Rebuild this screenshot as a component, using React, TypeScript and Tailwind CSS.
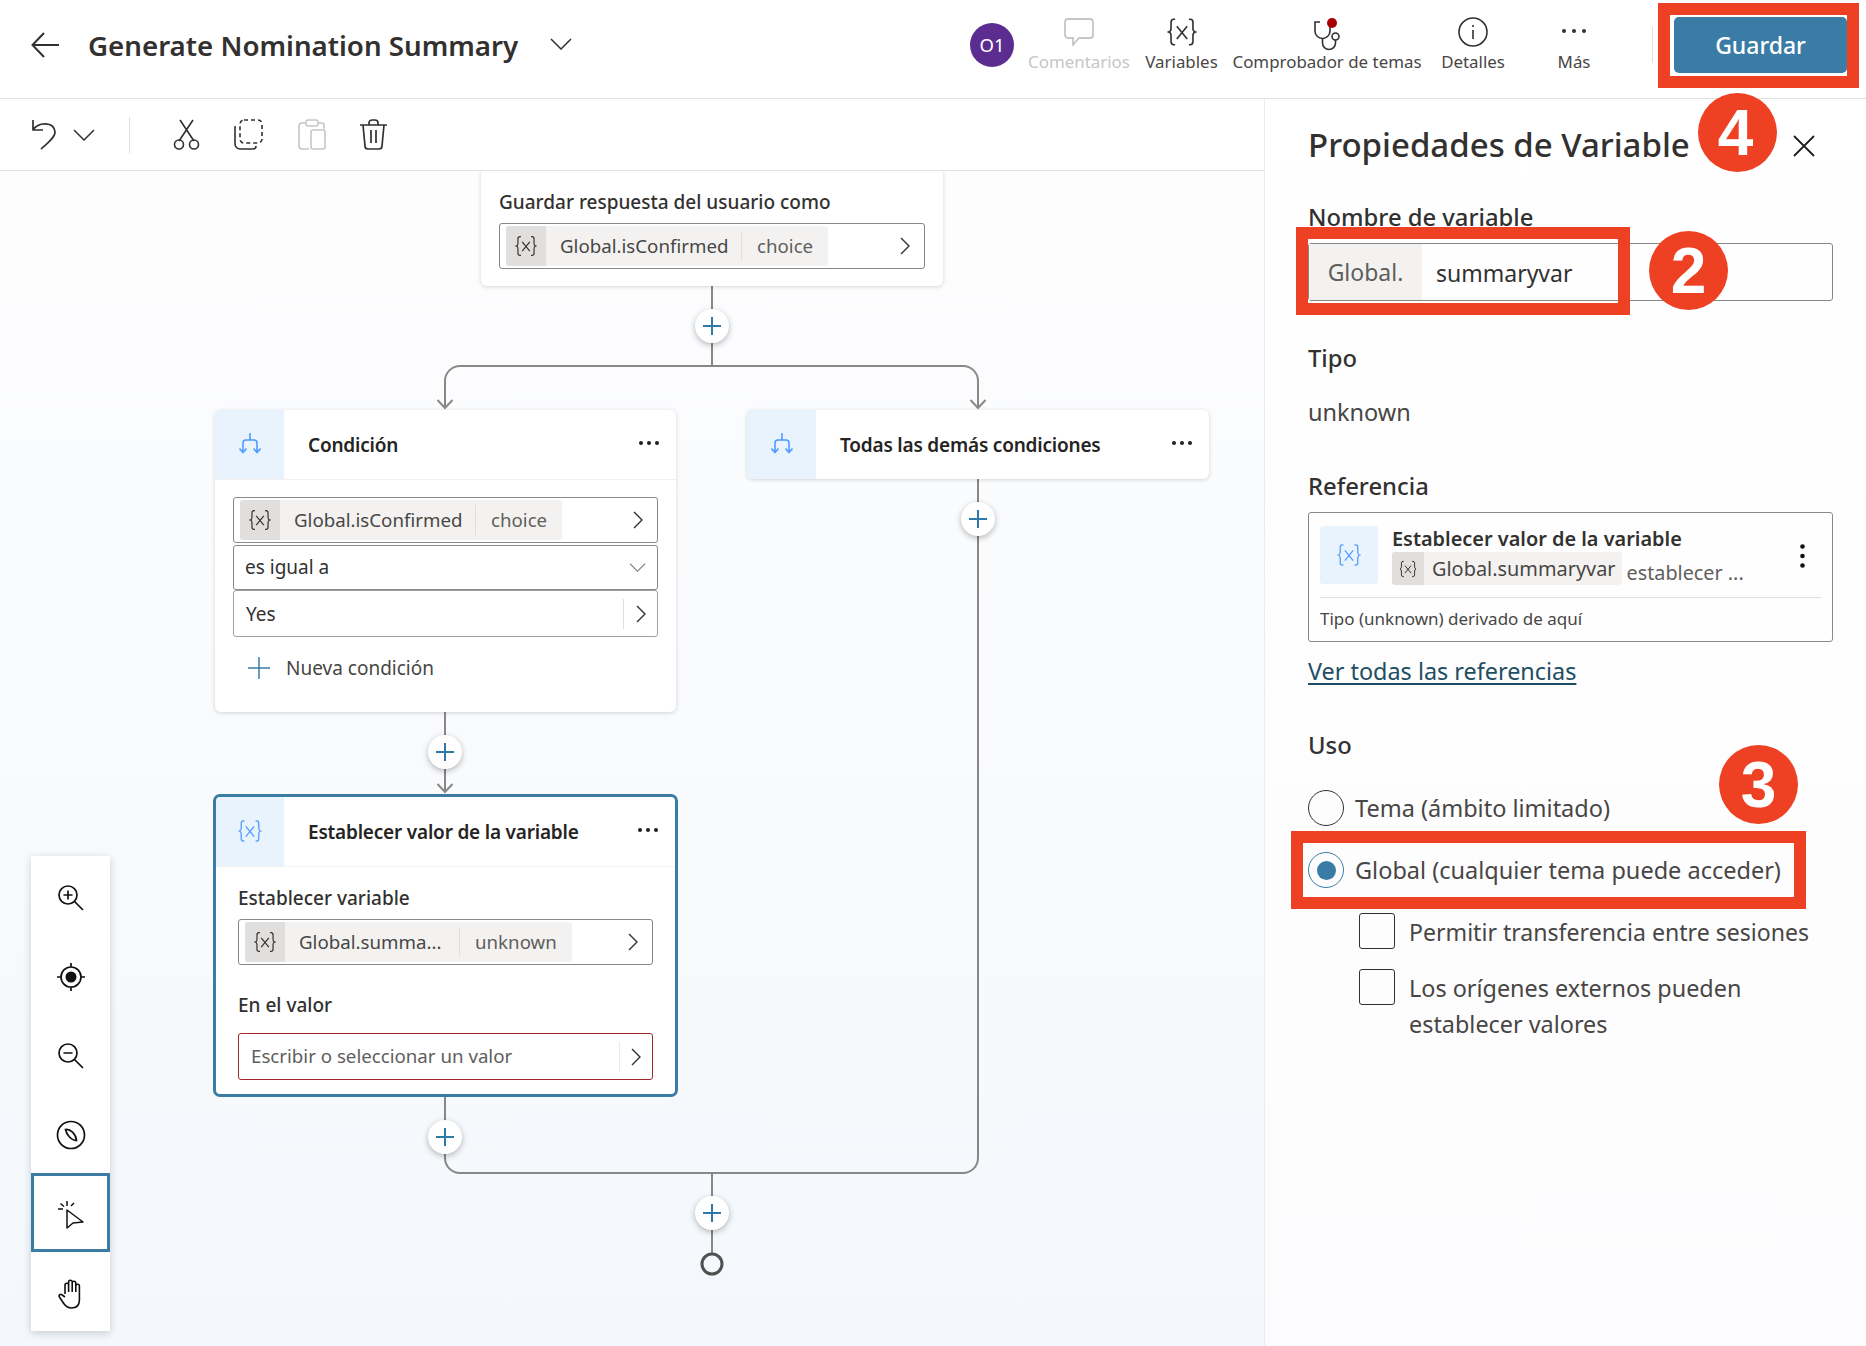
import React from "react";

const VarIcon = ({ className = "" }: { className?: string }) => (
  <svg viewBox="0 0 26 26" fill="none" stroke="currentColor" strokeWidth="1.4" className={className}>
    <path d="M7 2H6a2.5 2.5 0 0 0-2.5 2.5V10c0 1.6-.8 2.6-2 3 1.2.4 2 1.4 2 3v5.500A2.500 2.500 0 0 0 6 24h1" />
    <path d="M19 2h1a2.500 2.500 0 0 1 2.500 2.500V10c0 1.600.8 2.600 2 3-1.200.4-2 1.400-2 3v5.500A2.500 2.500 0 0 1 20 24h-1" />
    <path d="M8.500 8l9 11M17.500 8l-9 11" />
  </svg>
);

const BranchIcon = () => (
  <svg viewBox="0 0 22 21" fill="none" stroke="#4f9bff" strokeWidth="1.6" className="w-[22px] h-[21px]">
    <path d="M11 0v7M4 19V10a3 3 0 0 1 3-3h8a3 3 0 0 1 3 3v9M.5 15.500 4 19.500l3.500-4M14.500 15.500l3.500 4 3.500-4" />
  </svg>
);

const ChevronRight = ({ className = "" }: { className?: string }) => (
  <svg viewBox="0 0 10 18" fill="none" stroke="#323130" strokeWidth="1.4" className={`w-[10px] h-[18px] ${className}`}>
    <path d="M1 1l8 8-8 8" />
  </svg>
);

const ChevronDown = ({ className = "", color = "#323130" }: { className?: string; color?: string }) => (
  <svg viewBox="0 0 22 12" fill="none" stroke={color} strokeWidth="1.5" className={className}>
    <path d="M1 1l10 10L21 1" />
  </svg>
);

const Dots = () => (
  <svg viewBox="0 0 20 4" fill="#1f1f1f" className="w-[20px] h-[4px]">
    <circle cx="2" cy="2" r="2" />
    <circle cx="10" cy="2" r="2" />
    <circle cx="18" cy="2" r="2" />
  </svg>
);

const PlusButton = ({ x, y }: { x: number; y: number }) => (
  <div
    className="absolute w-[34px] h-[34px] -ml-[17px] -mt-[17px] rounded-full bg-white shadow-[0_2px_6px_rgba(0,0,0,0.28)] flex items-center justify-center"
    style={{ left: x, top: y - 171 }}
  >
    <svg viewBox="0 0 18 18" stroke="#2f79a8" strokeWidth="2" className="w-[18px] h-[18px]">
      <path d="M9 0v18M0 9h18" />
    </svg>
  </div>
);

interface ChipProps {
  name: string;
  type: string;
  nameWidth: string;
}

const Chip = ({ name, type, nameWidth }: ChipProps) => (
  <div className="flex items-center h-[40px] bg-[#f3f2f1] rounded-[3px] overflow-hidden">
    <div className="w-[40px] h-full bg-[#e1dfdd] flex items-center justify-center">
      <VarIcon className="w-[22px] h-[22px] text-[#323130]" />
    </div>
    <span className={`ml-[14px] text-[18.700px] text-[#484644] whitespace-nowrap ${nameWidth}`}>{name}</span>
    <div className="w-px h-[30px] bg-[#e1dfdd]" />
    <span className="mx-[15px] text-[18.700px] text-[#605e5c]">{type}</span>
  </div>
);

const VarField = ({ name, type, nameWidth, chevronClass }: ChipProps & { chevronClass: string }) => (
  <div className="flex items-center h-[46px] pl-[6px] border border-[#8a8886] rounded-[3px] bg-white">
    <Chip name={name} type={type} nameWidth={nameWidth} />
    <ChevronRight className={`ml-auto ${chevronClass}`} />
  </div>
);

const CardHeader = ({ icon, title, tile = "w-[69px]", round = "rounded-tl-[6px]" }: { icon: React.ReactNode; title: string; tile?: string; round?: string }) => (
  <div className="flex items-center h-[69px] pr-[17px]">
    <div className={`${tile} ${round} h-full bg-[#e8f3fe] flex items-center justify-center pb-[2px]`}>{icon}</div>
    <span className="ml-[24px] mt-[2px] text-[19px] tracking-[-0.2px] font-semibold text-[#252423]">{title}</span>
    <div className="ml-auto -mt-[3px]">
      <Dots />
    </div>
  </div>
);

const TopTool = ({ label, width, muted, children }: { label: string; width: string; muted?: boolean; children: React.ReactNode }) => (
  <div className={`flex flex-col items-center shrink-0 ${width}`}>
    <div className="h-[32px] flex items-center justify-center">{children}</div>
    <span className={`mt-[2px] text-[16.900px] leading-[24px] whitespace-nowrap ${muted ? "text-[#c8c6c4]" : "text-[#484644]"}`}>{label}</span>
  </div>
);

const Header = () => (
  <header className="flex items-start h-[99px] shrink-0 border-b border-[#e1dfdd] bg-white">
    <svg viewBox="0 0 28 26" fill="none" stroke="#323130" strokeWidth="2" className="w-[28px] h-[26px] ml-[31px] mt-[32px]">
      <path d="M13 1L1.500 13 13 25M1.500 13H28" />
    </svg>
    <h1 className="ml-[29px] mt-[25px] text-[27.700px] leading-[40px] font-semibold text-[#323130] whitespace-nowrap">Generate Nomination Summary</h1>
    <ChevronDown className="w-[22px] h-[12px] ml-[32px] mt-[38px]" />
    <div className="ml-auto flex items-start h-full pr-[19px]">
      <div className="w-[44px] h-[44px] mt-[23px] rounded-full bg-[#5c2d91] text-white text-[18.500px] flex items-center justify-center">O1</div>
      <div className="flex items-start mt-[16px] ml-[15px]">
        <TopTool label="Comentarios" width="w-[100px]" muted>
          <svg viewBox="0 0 30 28" fill="none" stroke="#c8c6c4" strokeWidth="1.800" className="w-[30px] h-[28px]">
            <path d="M4 1h22a3 3 0 0 1 3 3v13a3 3 0 0 1-3 3H15l-6 7v-7H4a3 3 0 0 1-3-3V4a3 3 0 0 1 3-3z" />
          </svg>
        </TopTool>
        <div className="ml-[17px]">
          <TopTool label="Variables" width="w-[71px]">
            <VarIcon className="w-[30px] h-[30px] text-[#323130]" />
          </TopTool>
        </div>
        <div className="ml-[16px]">
          <TopTool label="Comprobador de temas" width="w-[188px]">
            <svg viewBox="0 0 30 33" fill="none" stroke="#323130" strokeWidth="1.600" className="w-[30px] h-[33px] mt-[4px]">
              <path d="M8 4H3v9a7.500 7.500 0 0 0 15 0V6" />
              <path d="M10.500 20.500V25a6.500 6.500 0 0 0 13 0v-3" />
              <circle cx="23.500" cy="18.500" r="3.500" />
              <circle cx="20" cy="5" r="5" fill="#a80000" stroke="none" />
            </svg>
          </TopTool>
        </div>
        <div className="ml-[21px]">
          <TopTool label="Detalles" width="w-[62px]">
            <svg viewBox="0 0 30 30" fill="none" stroke="#323130" strokeWidth="1.600" className="w-[30px] h-[30px]">
              <circle cx="15" cy="15" r="14" />
              <path d="M15 13v9M15 8v2" />
            </svg>
          </TopTool>
        </div>
        <div className="ml-[54px]">
          <TopTool label="Más" width="w-[32px]">
            <svg viewBox="0 0 24 4" fill="#323130" className="w-[24px] h-[4px] -mt-[2px]">
              <circle cx="2" cy="2" r="2" />
              <circle cx="12" cy="2" r="2" />
              <circle cx="22" cy="2" r="2" />
            </svg>
          </TopTool>
        </div>
      </div>
      <div className="w-px h-[36px] mt-[27px] ml-[62px] bg-[#e1dfdd]" />
      <button className="w-[173px] h-[56px] mt-[17px] ml-[21px] pt-[1px] rounded-[5px] bg-[#3a7ca5] text-white text-[23px] font-medium">Guardar</button>
    </div>
  </header>
);

const Toolbar = () => (
  <div className="flex items-center h-[72px] shrink-0 border-b border-[#e1dfdd] bg-white pl-[31px]">
    <svg viewBox="0 0 25 31" fill="none" stroke="#323130" strokeWidth="1.700" className="w-[25px] h-[31px]">
      <path d="M2 1v10h10M2 11C7 3 23 2 24 13c.3 5-7 11-14 17" />
    </svg>
    <ChevronDown className="w-[22px] h-[12px] ml-[17px]" />
    <div className="w-px h-[36px] ml-[34px] bg-[#e1dfdd]" />
    <svg viewBox="0 0 27 31" fill="none" stroke="#323130" strokeWidth="1.600" className="w-[27px] h-[31px] ml-[43px]">
      <path d="M6 22L20 1M21 22L7 1" />
      <circle cx="6" cy="25.500" r="4.500" />
      <circle cx="21" cy="25.500" r="4.500" />
    </svg>
    <svg viewBox="0 0 31 31" fill="none" stroke="#323130" strokeWidth="1.600" className="w-[31px] h-[31px] ml-[32px]">
      <rect x="8" y="1" width="22" height="23" rx="4" strokeDasharray="4 3" />
      <path d="M4 8H3v17a5 5 0 0 0 5 5h13a3 3 0 0 0 3-3" />
    </svg>
    <svg viewBox="0 0 28 31" fill="none" stroke="#c8c6c4" strokeWidth="1.600" className="w-[28px] h-[31px] ml-[35px]">
      <path d="M7 4H4a3 3 0 0 0-3 3v20a3 3 0 0 0 3 3h7M21 4h3a2 2 0 0 1 2 2v4" />
      <rect x="8" y="1" width="12" height="6" rx="2" />
      <rect x="13" y="11" width="14" height="19" rx="2" />
    </svg>
    <svg viewBox="0 0 29 31" fill="none" stroke="#323130" strokeWidth="1.700" className="w-[29px] h-[31px] ml-[33px]">
      <path d="M1 6h27M10 6V4a3 3 0 0 1 3-3h3a3 3 0 0 1 3 3v2M4 6l2 21a3 3 0 0 0 3 3h11a3 3 0 0 0 3-3l2-21M12 11v13M17 11v13" />
    </svg>
  </div>
);

const ToolRailItem = ({ selected, children }: { selected?: boolean; children: React.ReactNode }) => (
  <div className={`h-[79.200px] pt-[4px] flex items-center justify-center ${selected ? "border-[3px] border-[#3a7ca5]" : ""}`}>{children}</div>
);

const ToolRail = () => (
  <div className="absolute left-[31px] top-[685px] w-[79px] bg-white shadow-[0_2px_8px_rgba(0,0,0,0.18)] flex flex-col">
    <ToolRailItem>
      <svg viewBox="0 0 26 26" fill="none" stroke="#111" strokeWidth="1.700" className="w-[26px] h-[26px]">
        <circle cx="10" cy="10" r="9" />
        <path d="M16.500 16.500L25 25M5.500 10h9M10 5.500v9" />
      </svg>
    </ToolRailItem>
    <ToolRailItem>
      <svg viewBox="0 0 30 30" fill="none" stroke="#111" strokeWidth="1.700" className="w-[30px] h-[30px]">
        <circle cx="15" cy="15" r="10" />
        <circle cx="15" cy="15" r="5.500" fill="#111" stroke="none" />
        <path d="M15 1v4M15 25v4M1 15h4M25 15h4" />
      </svg>
    </ToolRailItem>
    <ToolRailItem>
      <svg viewBox="0 0 26 26" fill="none" stroke="#111" strokeWidth="1.700" className="w-[26px] h-[26px]">
        <circle cx="10" cy="10" r="9" />
        <path d="M16.500 16.500L25 25M5.500 10h9" />
      </svg>
    </ToolRailItem>
    <ToolRailItem>
      <svg viewBox="0 0 30 30" fill="none" stroke="#111" strokeWidth="1.700" className="w-[30px] h-[30px]">
        <circle cx="15" cy="15" r="13.500" />
        <path d="M9.500 9.500C14 8.500 20 14 20.500 20.500C16 21 10.500 15 9.500 9.500z" />
      </svg>
    </ToolRailItem>
    <ToolRailItem selected>
      <svg viewBox="0 0 28 29" fill="none" stroke="#111" strokeWidth="1.500" className="w-[28px] h-[29px]">
        <path d="M10 10v18l6-5 10-1L10 10z" strokeLinejoin="round" />
        <path d="M10 1v5M1 9h5M3.500 3.500L7 6.500M17 3l-3 3" />
      </svg>
    </ToolRailItem>
    <ToolRailItem>
      <svg viewBox="0 0 26 30" fill="none" stroke="#111" strokeWidth="1.600" className="w-[26px] h-[30px]">
        <path d="M7 15V6a1.800 1.800 0 0 1 3.600 0v7M10.600 13V3a1.800 1.800 0 0 1 3.600 0v10M14.200 13V4a1.800 1.800 0 0 1 3.600 0v9M17.800 13V7a1.800 1.800 0 0 1 3.600 0v14c0 5-3 8-8 8-4 0-6-2-8-5l-4-6c-1-2 1-3.500 2.800-2L7 18" />
      </svg>
    </ToolRailItem>
  </div>
);

const Connectors = () => (
  <svg viewBox="0 171 1264 1175" fill="none" stroke="#8a8886" strokeWidth="2" className="absolute inset-0 w-[1264px] h-[1175px]">
    <path d="M712 286V366" />
    <path d="M445 407V381a15 15 0 0 1 15-15H963a15 15 0 0 1 15 15V407" />
    <path d="M437.500 400L445 408l7.500-8M970.500 400l7.500 8 7.500-8" />
    <path d="M445 712V792M437.500 784l7.500 8 7.500-8" />
    <path d="M445 1097V1158a15 15 0 0 0 15 15H963a15 15 0 0 0 15-15V479" />
    <path d="M712 1173V1253" />
    <circle cx="712" cy="1264" r="10" stroke="#505050" strokeWidth="3" />
  </svg>
);

const Canvas = () => (
  <div className="relative flex-1 overflow-hidden bg-gradient-to-b from-[#fdfdfe] to-[#f4f8fc]">
    <Connectors />
    {/* top card, clipped under toolbar */}
    <div className="absolute left-[481px] top-0 w-[462px] h-[115px] bg-white rounded-b-[6px] shadow-[0_1px_4px_rgba(0,0,0,0.16)] px-[18px] pt-[18px]">
      <div className="text-[19px] leading-[26px] font-medium text-[#323130]">Guardar respuesta del usuario como</div>
      <div className="mt-[8px]">
        <VarField name="Global.isConfirmed" type="choice" nameWidth="w-[181px]" chevronClass="mr-[14px]" />
      </div>
    </div>

    <div className="absolute left-[215px] top-[239px] w-[461px] h-[302px] bg-white rounded-[6px] shadow-[0_1px_4px_rgba(0,0,0,0.16)]">
      <div className="border-b border-[#f3f2f1]">
        <CardHeader icon={<BranchIcon />} title="Condición" />
      </div>
      <div className="mx-[18px] mt-[17px]">
        <VarField name="Global.isConfirmed" type="choice" nameWidth="w-[181px]" chevronClass="mr-[14px]" />
        <div className="flex items-center justify-between h-[45px] mt-[2px] px-[11px] border border-[#8a8886] rounded-[3px]">
          <span className="text-[19px] text-[#323130]">es igual a</span>
          <ChevronDown className="w-[17px] h-[9px]" color="#8a8886" />
        </div>
        <div className="flex items-center h-[47px] pl-[12px] border border-[#a19f9d] rounded-[3px]">
          <span className="mt-[2px] text-[19px] text-[#323130]">Yes</span>
          <div className="ml-auto w-px h-[30px] bg-[#e1dfdd]" />
          <ChevronRight className="ml-[12px] mr-[11px]" />
        </div>
        <div className="flex items-center mt-[17px] ml-[15px]">
          <svg viewBox="0 0 22 22" stroke="#3a7ca5" strokeWidth="1.500" className="w-[22px] h-[22px]">
            <path d="M11 0v22M0 11h22" />
          </svg>
          <span className="ml-[16px] text-[19px] text-[#484644]">Nueva condición</span>
        </div>
      </div>
    </div>

    <div className="absolute left-[747px] top-[239px] w-[462px] h-[69px] bg-white rounded-[6px] shadow-[0_1px_4px_rgba(0,0,0,0.16)]">
      <CardHeader icon={<BranchIcon />} title="Todas las demás condiciones" round="rounded-l-[6px]" />
    </div>

    <div className="absolute left-[213px] top-[623px] w-[465px] h-[303px] bg-white rounded-[7px] border-[3px] border-[#3a7ca5]">
      <div className="border-b border-[#f3f2f1]">
        <CardHeader icon={<VarIcon className="w-[24px] h-[24px] text-[#4f9bff]" />} title="Establecer valor de la variable" tile="w-[68px]" />
      </div>
      <div className="mx-[22px]">
        <div className="mt-[18px] text-[19px] leading-[26px] font-medium text-[#323130]">Establecer variable</div>
        <div className="mt-[8px]">
          <VarField name="Global.summa..." type="unknown" nameWidth="w-[160px]" chevronClass="mr-[14px]" />
        </div>
        <div className="mt-[27px] text-[19px] leading-[26px] font-medium text-[#323130]">En el valor</div>
        <div className="flex items-center h-[47px] mt-[15px] pl-[12px] border border-[#a4262c] rounded-[3px]">
          <span className="text-[18.700px] text-[#605e5c]">Escribir o seleccionar un valor</span>
          <div className="ml-auto w-px h-[30px] bg-[#edebe9]" />
          <ChevronRight className="mx-[11px]" />
        </div>
      </div>
    </div>

    <PlusButton x={712} y={326} />
    <PlusButton x={978} y={519} />
    <PlusButton x={445} y={752} />
    <PlusButton x={445} y={1137} />
    <PlusButton x={712} y={1213} />
    <ToolRail />
  </div>
);

const Properties = () => (
  <aside className="flex flex-col w-[602px] shrink-0 border-l border-[#edebe9] pl-[43px] pr-[33px] bg-gradient-to-b from-white to-[#fcfcfe]">
    <div className="flex items-center h-[44px] mt-[24px]">
      <h2 className="text-[33px] font-medium text-[#323130] whitespace-nowrap">Propiedades de Variable</h2>
      <svg viewBox="0 0 22 22" fill="none" stroke="#1f1f1f" strokeWidth="1.800" className="w-[22px] h-[22px] ml-auto mr-[18px] mt-[2px]">
        <path d="M1 1l20 20M21 1L1 21" />
      </svg>
    </div>
    <div className="mt-[34px] text-[23.800px] leading-[32px] font-medium text-[#323130]">Nombre de variable</div>
    <div className="flex items-center h-[58px] mt-[10px] border border-[#8a8886] rounded-[3px]">
      <div className="h-full w-[113px] bg-[#f3f2f1] flex items-center justify-center text-[23px] text-[#605e5c]">Global.</div>
      <span className="ml-[14px] mt-[2px] text-[23px] text-[#323130]">summaryvar</span>
    </div>
    <div className="mt-[41px] text-[23.800px] leading-[32px] font-medium text-[#323130]">Tipo</div>
    <div className="mt-[22px] text-[23.500px] leading-[32px] text-[#484644]">unknown</div>
    <div className="mt-[42px] text-[23.800px] leading-[32px] font-medium text-[#323130]">Referencia</div>
    <div className="mt-[10px] h-[130px] border border-[#8a8886] rounded-[3px] px-[11px] pt-[13px]">
      <div className="flex items-start h-[72px] border-b border-[#e1dfdd]">
        <div className="w-[58px] h-[58px] bg-[#e8f3fe] rounded-[3px] flex items-center justify-center">
          <VarIcon className="w-[24px] h-[24px] text-[#4f9bff]" />
        </div>
        <div className="ml-[14px] flex flex-col">
          <span className="text-[19.900px] leading-[26px] font-semibold text-[#323130] whitespace-nowrap">Establecer valor de la variable</span>
          <div className="flex items-start">
            <div className="flex items-center h-[33px] bg-[#f3f2f1] rounded-[3px] overflow-hidden">
              <div className="w-[32px] h-full bg-[#e1dfdd] flex items-center justify-center">
                <VarIcon className="w-[18px] h-[18px] text-[#323130]" />
              </div>
              <span className="ml-[8px] mr-[6px] mt-[1px] text-[19.900px] text-[#484644] whitespace-nowrap">Global.summaryvar</span>
            </div>
            <span className="ml-[5px] mt-[7px] text-[19.800px] leading-[28px] text-[#605e5c] whitespace-nowrap">establecer ...</span>
          </div>
        </div>
        <svg viewBox="0 0 5 24" fill="#111" className="w-[5px] h-[24px] ml-auto mr-[16px] mt-[18px]">
          <circle cx="2.500" cy="2.500" r="2.300" />
          <circle cx="2.500" cy="12" r="2.300" />
          <circle cx="2.500" cy="21.500" r="2.300" />
        </svg>
      </div>
      <div className="mt-[9px] text-[17px] leading-[24px] text-[#484644]">Tipo (unknown) derivado de aquí</div>
    </div>
    <a className="mt-[13px] text-[23.400px] leading-[32px] text-[#1d4e63] underline underline-offset-[3px]">Ver todas las referencias</a>
    <div className="mt-[42px] text-[23.800px] leading-[32px] font-medium text-[#323130]">Uso</div>
    <div className="flex items-center h-[36px] mt-[29px]">
      <div className="w-[36px] h-[36px] rounded-full border border-[#323130]" />
      <span className="ml-[11px] mt-[2px] text-[23.500px] text-[#484644]">Tema (ámbito limitado)</span>
    </div>
    <div className="flex items-center h-[36px] mt-[26px]">
      <div className="w-[36px] h-[36px] rounded-full border border-[#3a7ca5] flex items-center justify-center">
        <div className="w-[19px] h-[19px] rounded-full bg-[#3a7ca5]" />
      </div>
      <span className="ml-[11px] mt-[2px] text-[23.500px] text-[#484644]">Global (cualquier tema puede acceder)</span>
    </div>
    <div className="flex items-start mt-[25px] ml-[51px]">
      <div className="w-[36px] h-[36px] shrink-0 border border-[#323130] rounded-[3px]" />
      <span className="ml-[14px] mt-[1px] text-[23.100px] leading-[36px] text-[#484644] whitespace-nowrap">Permitir transferencia entre sesiones</span>
    </div>
    <div className="flex items-start mt-[19px] ml-[51px]">
      <div className="w-[36px] h-[36px] shrink-0 border border-[#323130] rounded-[3px]" />
      <span className="ml-[14px] mt-[1px] text-[23.400px] leading-[36px] text-[#484644]">
        Los orígenes externos pueden
        <br />
        establecer valores
      </span>
    </div>
  </aside>
);

const Callout = ({ className }: { className: string }) => (
  <div className={`absolute border-[12px] border-[#ee4023] pointer-events-none ${className}`} />
);

const Badge = ({ n, className }: { n: string; className: string }) => (
  <div className={`absolute w-[79px] h-[79px] rounded-full bg-[#ee4023] text-white flex items-center justify-center font-['Liberation_Sans',sans-serif] font-bold text-[64px] leading-none ${className}`}>
    {n}
  </div>
);

export default function App() {
  return (
    <div className="relative flex flex-col w-[1866px] h-[1346px] overflow-hidden bg-white font-['Noto_Sans',sans-serif]">
      <Header />
      <div className="flex flex-1 min-h-0">
        <div className="flex flex-col w-[1264px] shrink-0">
          <Toolbar />
          <Canvas />
        </div>
        <Properties />
      </div>
      <Callout className="left-[1658px] top-[3px] w-[201px] h-[85px]" />
      <Callout className="left-[1296px] top-[227px] w-[334px] h-[88px]" />
      <Callout className="left-[1291px] top-[831px] w-[515px] h-[78px]" />
      <Badge n="4" className="left-[1698px] top-[93px] pr-[4px]" />
      <Badge n="2" className="left-[1649px] top-[231px]" />
      <Badge n="3" className="left-[1719px] top-[745px]" />
    </div>
  );
}
